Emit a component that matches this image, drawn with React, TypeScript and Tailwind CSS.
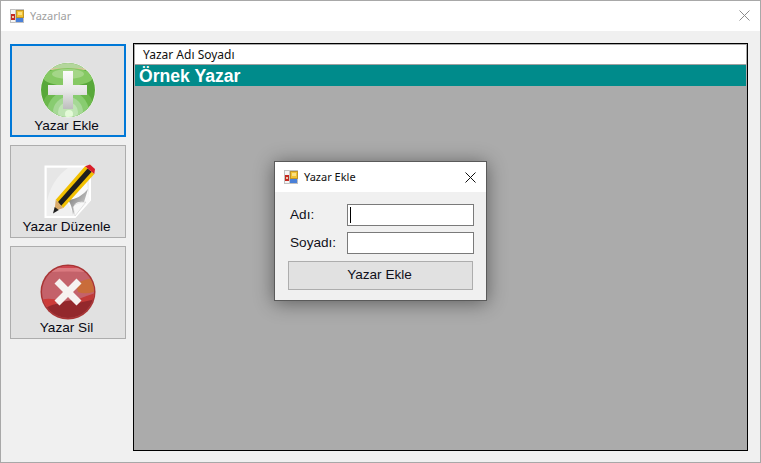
const uiFont = "font-['Noto_Sans','Open_Sans',sans-serif]";

function AppIcon() {
  return (
    <svg width="15" height="14" viewBox="0 0 15 14" shapeRendering="crispEdges">
      <rect x="0.5" y="0.5" width="13" height="13" fill="#f4f4f4" stroke="#c0c0c0" />
      <path d="M5.5 0 V14 M0 7.5 H14" stroke="#c8c8c8" />
      <rect x="1" y="5" width="4" height="6" fill="#c42a22" />
      <rect x="2" y="7" width="2" height="2" fill="#eec8a8" />
      <rect x="6" y="1" width="7" height="7" fill="#f2c230" stroke="#c09428" strokeWidth="1" />
      <rect x="8" y="3" width="4" height="3" fill="#fbe080" />
      <rect x="6" y="9" width="7" height="4" fill="#4a80d8" />
    </svg>
  );
}

function CloseIcon({ color }: { color: string }) {
  return (
    <svg width="11" height="11" viewBox="0 0 11 11" stroke={color} strokeWidth="1">
      <path d="M0.5 0.5 L10.5 10.5 M10.5 0.5 L0.5 10.5" />
    </svg>
  );
}

function AddIcon() {
  return (
    <svg width="56" height="56" viewBox="0 0 56 56">
      <defs>
        <clipPath id="addClip">
          <circle cx="28" cy="28" r="27" />
        </clipPath>
        <linearGradient id="plusFill" x1="0" y1="0" x2="0" y2="1">
          <stop offset="0" stopColor="#fbfbfb" />
          <stop offset="0.55" stopColor="#e6e6e6" />
          <stop offset="1" stopColor="#bdbdbd" />
        </linearGradient>
      </defs>
      <circle cx="28" cy="28" r="27.5" fill="#f4f8f0" />
      <g clipPath="url(#addClip)">
        <rect width="56" height="56" fill="#58a83a" />
        <rect width="56" height="8" fill="#b4d69c" />
        <rect y="6" width="56" height="2" fill="#d2c79a" />
        <ellipse cx="28" cy="15" rx="25" ry="9" fill="#86c964" />
        <ellipse cx="28" cy="12" rx="16" ry="5" fill="#a4d688" />
        <ellipse cx="28" cy="50" rx="27" ry="27" fill="#6cb84c" />
        <ellipse cx="28" cy="50" rx="21" ry="21" fill="#88cc70" />
        <ellipse cx="28" cy="50" rx="15" ry="15" fill="#a6d896" />
        <ellipse cx="28" cy="50" rx="10" ry="10" fill="#bfe4b4" />
        <ellipse cx="29" cy="52" rx="4" ry="4" fill="#e4fad8" />
      </g>
      <path d="M23 9 H33 V23 H47 V33 H33 V47 H23 V33 H8 V23 H23 Z" fill="url(#plusFill)" />
    </svg>
  );
}

function EditIcon() {
  return (
    <svg width="56" height="56" viewBox="0 0 56 56">
      <defs>
        <linearGradient id="curlFill" x1="0" y1="0" x2="1" y2="1">
          <stop offset="0" stopColor="#6e6e6e" />
          <stop offset="1" stopColor="#e8e8e8" />
        </linearGradient>
      </defs>
      <path d="M5.5 3.5 H50 V37 L35 54 H5.5 Z" fill="#f0f0f0" stroke="#fff" strokeWidth="2" />
      <path d="M7 5 H28 Q12 16 7 38 Z" fill="#e6e6e6" />
      <path d="M26 36 L46 16 L50 38 L34 53 Z" fill="#fafafa" />
      <path d="M28 37 Q40 36 48 26 L44 39 Q36 38 34 43 Q35 48 33 52 Q32 42 28 37 Z" fill="url(#curlFill)" />
      <path d="M33 44 Q36 39 46 39 L35 53 Z" fill="#f8f8f8" stroke="#c8c8c8" strokeWidth="0.5" />
      <path d="M15.7 36.7 L45 3.3 L54.3 11 L23.3 45 Z" fill="#f2c000" />
      <path d="M18 39 L47.6 5.5 L51.7 8.8 L21.2 42.7 Z" fill="#1e1e1e" />
      <path d="M45 3.3 L50 1.5 L55 6 L54.3 11 Z" fill="#d81e2a" />
      <path d="M15.7 36.7 L23.3 45 L14.5 48 Z" fill="#d9ab6c" />
      <path d="M13 50.5 L14.7 44 L18.8 47 Z" fill="#1e1e1e" />
    </svg>
  );
}

function DeleteIcon() {
  return (
    <svg width="56" height="56" viewBox="0 0 56 56">
      <defs>
        <clipPath id="delClip">
          <circle cx="28" cy="28" r="26" />
        </clipPath>
      </defs>
      <circle cx="28" cy="28" r="27.5" fill="#a83434" />
      <g clipPath="url(#delClip)">
        <rect width="56" height="56" fill="#c4626a" />
        <path d="M0 0 H56 V4 H0 Z" fill="#d0444e" />
        <path d="M0 4 H56 V9 Q28 6 0 9 Z" fill="#da7a80" />
        <path d="M36 20 Q46 14 56 15 V27 Q46 31 38 28 Z" fill="#c96c3a" />
        <path d="M0 36 Q10 33 20 37 L12 42 L0 44 Z" fill="#cc3b38" />
        <path d="M0 46 Q28 33 56 35 V56 H0 Z" fill="#93282c" />
        <path d="M36 36 Q46 32 56 29 V35 L38 39 Z" fill="#c23a38" />
      </g>
      <path d="M28 23 L36.5 14.5 L41.5 19.5 L33 28 L41.5 36.5 L36.5 41.5 L28 33 L19.5 41.5 L14.5 36.5 L23 28 L14.5 19.5 L19.5 14.5 Z" fill="#f6f2f0" />
    </svg>
  );
}

const buttons = [
  { label: "Yazar Ekle", icon: <AddIcon />, active: true },
  { label: "Yazar Düzenle", icon: <EditIcon />, active: false },
  { label: "Yazar Sil", icon: <DeleteIcon />, active: false },
];

export default function App() {
  return (
    <div className="w-[761px] h-[463px] flex flex-col overflow-hidden border border-[#a8a8a8] bg-[#f0f0f0] font-['Liberation_Sans',sans-serif]">
      <div className="h-[30px] shrink-0 flex items-center bg-white pl-[9px] pr-[10px]">
        <span className="flex mb-[1px]">
          <AppIcon />
        </span>
        <span className={`ml-[5px] text-[11px] text-[#a0a0a0] ${uiFont}`}>Yazarlar</span>
        <span className="ml-auto flex mb-[2px]">
          <CloseIcon color="#8c8c8c" />
        </span>
      </div>

      <div className="flex-1 flex pt-[12px] pl-[9px] pr-[12px] pb-[11px] gap-[7px]">
        <div className="w-[116px] shrink-0 flex flex-col gap-[8px] pt-px">
          {buttons.map((b) => (
            <button
              key={b.label}
              className={`h-[93px] flex flex-col items-center justify-end bg-[#e1e1e1] text-[13.6px] leading-[16px] text-[#0a0a14] ${
                b.active ? "border-2 border-[#0078d7] pb-px" : "border border-[#adadad] pb-[2px]"
              }`}
            >
              <span className="flex">{b.icon}</span>
              <span className="mr-[3px]">{b.label}</span>
            </button>
          ))}
        </div>

        <div className="relative flex-1 border border-black bg-[#ababab] p-px">
          <div className={`h-[20px] flex items-center bg-white border-b border-[#a0a0a0] pl-[8px] text-[12px] text-[#101010] ${uiFont}`}>
            Yazar Adı Soyadı
          </div>
          <div className="h-[21px] flex items-center bg-[#008b8b] pl-[4px] pt-px text-[17.6px] font-bold text-white">
            Örnek Yazar
          </div>

          <div className="absolute left-[140px] top-[117px] w-[213px] h-[140px] flex flex-col border border-[#5a5a5a] bg-[#f0f0f0] shadow-[0_2px_18px_rgba(0,0,0,0.45)]">
            <div className="h-[30px] shrink-0 flex items-center bg-white pl-[9px] pr-[10px]">
              <AppIcon />
              <span className={`ml-[5px] text-[11px] text-[#101010] ${uiFont}`}>Yazar Ekle</span>
              <span className="ml-auto flex">
                <CloseIcon color="#101010" />
              </span>
            </div>
            <div className="flex-1 flex flex-col pt-[12px] pl-[13px] pr-[12px] text-[13.6px] text-[#10101a]">
              <div className="flex items-center h-[22px] pl-[2px]">
                <span className="w-[57px] shrink-0">Adı:</span>
                <div className="w-[127px] h-[22px] flex items-center border border-[#7a7a7a] bg-white pl-[2px]">
                  <div className="w-px h-[16px] bg-black" />
                </div>
              </div>
              <div className="flex items-center h-[22px] mt-[6px] pl-[2px]">
                <span className="w-[57px] shrink-0">Soyadı:</span>
                <div className="w-[127px] h-[22px] border border-[#7a7a7a] bg-white" />
              </div>
              <button className="w-[185px] h-[29px] mt-[7px] pr-[2px] border border-[#adadad] bg-[#e1e1e1] text-[13.6px] text-[#10101a]">
                Yazar Ekle
              </button>
            </div>
          </div>
        </div>
      </div>
    </div>
  );
}
